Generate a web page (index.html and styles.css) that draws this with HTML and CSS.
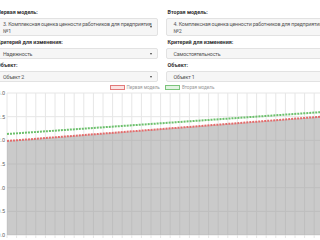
FILE: index.html
```html
<!DOCTYPE html>
<html lang="ru">
<head>
    <meta charset="UTF-8">
    <title>Сравнение моделей</title>
    <link rel="stylesheet" href="styles.css">
</head>
<body>
    <div class="form">
        <div class="col">
            <div class="label">Первая модель:</div>
            <div class="select tall">3. Комплексная оценка ценности работников для предприятия<br>№1<span class="arrow"></span></div>
            <div class="label">Критерий для изменения:</div>
            <div class="select">Надежность<span class="arrow"></span></div>
            <div class="label">Объект:</div>
            <div class="select">Объект 2<span class="arrow"></span></div>
        </div>
        <div class="col">
            <div class="label">Вторая модель:</div>
            <div class="select tall">4. Комплексная оценка ценности работников для предприятия<br>№2<span class="arrow"></span></div>
            <div class="label">Критерий для изменения:</div>
            <div class="select">Самостоятельность<span class="arrow"></span></div>
            <div class="label">Объект:</div>
            <div class="select">Объект 1<span class="arrow"></span></div>
        </div>
    </div>
    <div class="chart">
        <div class="legend">
            <span class="swatch red"></span><span>Первая модель</span>
            <span class="swatch green"></span><span>Вторая модель</span>
        </div>
        <svg class="plot" width="320" height="150" viewBox="0 0 320 150">
            <g class="grid" id="grid"></g>
            <g class="ticks">
                <text x="5" y="5">3.0</text>
                <text x="5" y="28.7">2.5</text>
                <text x="5" y="52.3">2.0</text>
                <text x="5" y="76">1.5</text>
                <text x="5" y="99.7">1.0</text>
                <text x="5" y="123.3">0.5</text>
                <text x="5" y="147">0.0</text>
            </g>
            <polygon class="area" points="7,51 330,26 330,145 7,145"/>
            <line class="line-green" x1="7" y1="44" x2="330" y2="21.5"/>
            <line class="line-red" x1="7" y1="51" x2="330" y2="26"/>
        </svg>
    </div>
    <script>
    // chart grid
    var grid = document.getElementById('grid');
    var out = '';
    for (var i = 0; i < 7; i++) {
        var y = 3 + i * 23.67;
        out += '<line x1="7" y1="' + y + '" x2="320" y2="' + y + '"/>';
    }
    for (var x = 7; x < 320; x += 9.6) {
        out += '<line x1="' + x + '" y1="3" x2="' + x + '" y2="148"/>';
    }
    grid.innerHTML = out;
    </script>
</body>
</html>
```

FILE: styles.css
```css
body {
    margin: 0;
    background: #fff;
    font-family: Roboto, "Liberation Sans", Arial, sans-serif;
    overflow: hidden;
}
.form {
    display: flex;
    gap: 8px;
    margin-left: -5px;
    padding-top: 9px;
    width: 333px;
}
.col {
    flex: 1;
    display: flex;
    flex-direction: column;
}
.label {
    font-size: 5.4px;
    line-height: 7px;
    font-weight: bold;
    color: #333;
    padding-left: 2px;
    margin-bottom: 2px;
}
.select {
    position: relative;
    box-sizing: border-box;
    height: 11px;
    line-height: 9px;
    padding: 1px 0 0 7px;
    font-size: 5.3px;
    letter-spacing: -0.17px;
    color: #555;
    background: #f6f6f6;
    border: 1px solid #e2e2e2;
    border-radius: 2px;
    margin-bottom: 3px;
    white-space: nowrap;
    overflow: hidden;
}
.select.tall {
    height: 18px;
    line-height: 7px;
    padding-top: 2px;
}
.select:last-child {
    margin-bottom: 0;
}
.arrow {
    position: absolute;
    right: 5px;
    top: 50%;
    margin-top: -1px;
    border-left: 1.5px solid transparent;
    border-right: 1.5px solid transparent;
    border-top: 2px solid #444;
}
.chart {
    margin-top: 1px;
}
.legend {
    display: flex;
    justify-content: center;
    align-items: center;
    gap: 2px;
    height: 9px;
    font-size: 4.6px;
    color: #999;
    padding-left: 4px;
}
.swatch {
    box-sizing: border-box;
    width: 15px;
    height: 5px;
    border: 1px solid;
}
.swatch.green {
    margin-left: 3px;
}
.swatch.red {
    border-color: #e27a7a;
    background: #fbe3e3;
}
.swatch.green {
    border-color: #7cc47c;
    background: #e2f3e2;
}
.plot {
    display: block;
    margin-top: -2px;
}
.grid line {
    stroke: #e6e6e6;
    stroke-width: 1;
}
.ticks text {
    font-size: 5.5px;
    fill: #666;
    text-anchor: end;
}
.area {
    fill: rgba(150, 150, 150, 0.5);
}
.line-red {
    stroke: #e36b6b;
    stroke-width: 2;
    stroke-dasharray: 2 1;
}
.line-green {
    stroke: #6cc06c;
    stroke-width: 2;
    stroke-dasharray: 2 1;
}
```
